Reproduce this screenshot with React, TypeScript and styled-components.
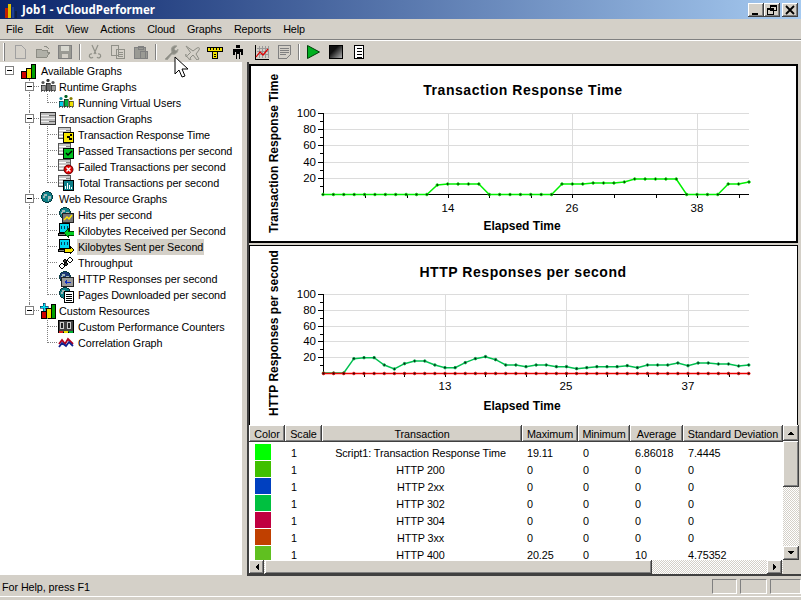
import React from 'react'
import styled, { createGlobalStyle } from 'styled-components'

const face = '#d4d0c8'
const uiFont = '"Liberation Sans", Arial, sans-serif'
const chartFont = '"Liberation Sans", Arial, sans-serif'
const raised = 'inset -1px -1px 0 #404040, inset 1px 1px 0 #fff, inset -2px -2px 0 #808080'

const GlobalStyle = createGlobalStyle`
  html, body { margin: 0; padding: 0; background: ${face}; }
  body { font-family: ${uiFont}; font-size: 10.8px; letter-spacing: -0.08px; color: #000; }
`

const Win = styled.div`
  position: relative;
  width: 801px;
  height: 600px;
  overflow: hidden;
  background: ${face};
`
const TitleBar = styled.div`
  height: 19px;
  display: flex;
  align-items: center;
  padding-left: 3px;
  background: linear-gradient(90deg, #0a246a, #a6caf0);
  color: #fff;
  font-family: "Noto Sans", sans-serif;
  font-weight: bold;
  font-size: 11.5px;
  letter-spacing: 0;
  svg { margin-right: 3px; }
`
const CapButtons = styled.div`
  position: absolute;
  top: 3px;
  right: 3px;
  display: flex;
`
const CapButton = styled.div<{ $gap?: boolean }>`
  width: 16px;
  height: 14px;
  margin-left: ${p => (p.$gap ? 2 : 0)}px;
  background: ${face};
  box-shadow: ${raised};
  svg { display: block; }
`
const MenuBar = styled.div`
  height: 20px;
  display: flex;
  align-items: center;
  gap: 12px;
  padding-left: 6px;
  border-bottom: 1px solid #808080;
  box-shadow: 0 1px 0 #fff;
`
const ToolBar = styled.div`
  position: relative;
  height: 22px;
  margin-top: 1px;
`
const Grip = styled.div`
  position: absolute;
  left: 3px;
  top: 2px;
  width: 1px;
  height: 18px;
  background: #fff;
  border-right: 1px solid #808080;
`
const ToolSep = styled.div<{ $x: number }>`
  position: absolute;
  left: ${p => p.$x}px;
  top: 3px;
  width: 0;
  height: 16px;
  border-left: 1px solid #808080;
  border-right: 1px solid #fff;
`
const ToolIcon = styled.div<{ $x: number }>`
  position: absolute;
  left: ${p => p.$x}px;
  top: 3px;
  width: 16px;
  height: 16px;
  svg { display: block; }
`
const Cursor = styled.svg`
  position: absolute;
  left: 174px;
  top: 56px;
  z-index: 5;
`

const TreePanel = styled.div`
  position: absolute;
  left: 0;
  top: 62px;
  width: 242px;
  height: 513px;
  background: #fff;
  padding-top: 1px;
  box-sizing: border-box;
`
const TreeRow = styled.div<{ $level: number }>`
  position: relative;
  height: 16px;
  display: flex;
  align-items: center;
  padding-left: ${p => [20, 40, 58][p.$level]}px;
  svg { flex: none; display: block; margin-right: ${p => (p.$level === 0 ? 5 : p.$level === 1 ? 3 : 4)}px; }
`
const TreeLabel = styled.span<{ $selected?: boolean }>`
  margin-left: ${p => (p.$selected ? -1 : 0)}px;
  padding: 0 ${p => (p.$selected ? 1 : 0)}px;
  white-space: nowrap;
  line-height: 16px;
  background: ${p => (p.$selected ? face : 'transparent')};
`
const Expander = styled.div<{ $x: number }>`
  position: absolute;
  left: ${p => p.$x}px;
  top: 3px;
  width: 7px;
  height: 7px;
  background: #fff;
  border: 1px solid #808080;
  z-index: 2;
  &::after {
    content: '';
    position: absolute;
    left: 1px;
    top: 3px;
    width: 5px;
    height: 1px;
    background: #000;
  }
`
const VGuide = styled.div<{ $x: number; $y: number; $h: number }>`
  position: absolute;
  left: ${p => p.$x}px;
  top: ${p => p.$y}px;
  height: ${p => p.$h}px;
  border-left: 1px dotted #808080;
`
const HGuide = styled.div<{ $x: number; $w: number }>`
  position: absolute;
  left: ${p => p.$x}px;
  top: 7px;
  width: ${p => p.$w}px;
  border-top: 1px dotted #808080;
`

const Divider = styled.div`
  position: absolute;
  left: 247px;
  top: 62px;
  width: 2px;
  height: 513px;
  background: #404040;
`
const ChartBox = styled.div<{ $top: number; $height: number; $active?: boolean }>`
  position: absolute;
  left: 249px;
  top: ${p => p.$top}px;
  width: 549px;
  height: ${p => p.$height}px;
  box-sizing: border-box;
  background: #fff;
  border: ${p => (p.$active ? 2 : 1)}px solid #000;
  ${p => (p.$active ? '' : 'border-bottom: none;')}
`
const ChartTitle = styled.div<{ $top: number }>`
  position: absolute;
  left: 248px;
  top: ${p => p.$top}px;
  width: 550px;
  text-align: center;
  font: bold 14px ${chartFont};
  letter-spacing: 0.55px;
  box-sizing: border-box;
  z-index: 2;
`
const XTitle = styled.div<{ $top: number }>`
  position: absolute;
  left: 422px;
  top: ${p => p.$top}px;
  width: 200px;
  text-align: center;
  font: bold 12px ${chartFont};
  letter-spacing: 0;
  z-index: 2;
`
const YTitle = styled.div<{ $bottom: number }>`
  position: absolute;
  left: 267px;
  top: ${p => p.$bottom}px;
  font: bold 12px ${chartFont};
  letter-spacing: 0;
  line-height: 14px;
  white-space: nowrap;
  transform-origin: 0 0;
  transform: rotate(-90deg);
  z-index: 2;
`
const Plot = styled.svg`
  position: absolute;
  left: 0;
  top: 0;
  z-index: 1;
  text { font: 11.5px ${chartFont}; letter-spacing: 0; }
`

const TableWrap = styled.div`
  position: absolute;
  left: 249px;
  top: 425px;
  width: 550px;
  height: 135px;
  background: #fff;
  overflow: hidden;
`
const HeadRow = styled.div`
  display: flex;
  height: 17px;
  margin-bottom: 1px;
`
const HeadCell = styled.div<{ $w: number }>`
  width: ${p => p.$w}px;
  flex: none;
  box-sizing: border-box;
  text-align: center;
  line-height: 18px;
  background: ${face};
  white-space: nowrap;
  overflow: hidden;
  box-shadow: ${raised};
`
const BodyRow = styled.div`
  display: flex;
  height: 17px;
  line-height: 21px;
`
const Cell = styled.div<{ $w: number; $center?: boolean; $pad?: number }>`
  width: ${p => p.$w}px;
  flex: none;
  box-sizing: border-box;
  padding-left: ${p => p.$pad ?? (p.$center ? 0 : 5)}px;
  padding-right: ${p => (p.$center ? 3 : 0)}px;
  text-align: ${p => (p.$center ? 'center' : 'left')};
  white-space: nowrap;
`
const Swatch = styled.div<{ $color: string }>`
  width: 16px;
  height: 16px;
  margin: 1px 0 0 1px;
  background: ${p => p.$color};
`
const VBar = styled.div`
  position: absolute;
  left: 783px;
  top: 425px;
  width: 16px;
  height: 135px;
  background: repeating-conic-gradient(#fff 0 25%, ${face} 0 50%) 0 0 / 2px 2px;
`
const ScrollBtn = styled.div<{ $top?: number; $left?: number; $w?: number; $h?: number }>`
  position: absolute;
  left: ${p => p.$left ?? 0}px;
  top: ${p => p.$top ?? 0}px;
  width: ${p => p.$w ?? 16}px;
  height: ${p => p.$h ?? 16}px;
  background: ${face};
  box-shadow: ${raised};
  display: flex;
  align-items: center;
  justify-content: center;
`
const HBar = styled.div`
  position: absolute;
  left: 249px;
  top: 560px;
  width: 534px;
  height: 14px;
  background: repeating-conic-gradient(#fff 0 25%, ${face} 0 50%) 0 0 / 2px 2px;
`
const BottomEdge = styled.div`
  position: absolute;
  left: 247px;
  top: 574px;
  width: 554px;
  height: 2px;
  background: #404040;
`
const StatusBar = styled.div`
  position: absolute;
  left: 0;
  top: 577px;
  width: 801px;
  height: 20px;
  line-height: 20px;
  padding-left: 2px;
  box-sizing: border-box;
  border-bottom: 1px solid #fff;
`
const StatusCell = styled.div<{ $x: number; $w: number }>`
  position: absolute;
  left: ${p => p.$x}px;
  top: 2px;
  width: ${p => p.$w}px;
  height: 15px;
  box-sizing: border-box;
  border: 1px solid;
  border-color: #808080 #fff #fff #808080;
`

/* ---------- icon drawings, 16x16 unless noted ---------- */
const Ico = ({ children }: { children: React.ReactNode }) => (
  <svg width="16" height="16" viewBox="0 0 16 16" shapeRendering="crispEdges">{children}</svg>
)

const Bars = () => (
  <>
    <path d="M1 9l2-1h3v7H1z" fill="#d00000" stroke="#000" />
    <path d="M6 6l2-1h3v10H6z" fill="#f0e000" stroke="#000" />
    <path d="M11 2l2-1h2v14h-4z" fill="#00a000" stroke="#000" />
  </>
)
const DocStack = () => (
  <>
    <path d="M0.5 0.5h12v11h-12z" fill="#c8c8c8" stroke="#555" />
    <path d="M1 3h11M1 6h11M1 9h6" stroke="#fff" />
    <path d="M8 3h4M8 6h4" stroke="#888" />
  </>
)
const Globe = ({ c = '#0f7f86' }: { c?: string }) => (
  <>
    <circle cx="7" cy="6" r="5.5" fill={c} stroke="#063a40" />
    <path d="M4 3h3v2H5v2H3zM8 5h3v3H9v2H8z" fill="#9fb8b8" />
  </>
)
const Monitor = () => (
  <>
    <path d="M1.5 0.5h10v9h-10z" fill="#00d8f0" stroke="#000" />
    <path d="M3 3h1v3H3zM6 3h1v3H6zM9 3h1v3H9z" fill="#004060" />
    <path d="M0.5 10.5h10v2h-10z" fill="#808080" stroke="#000" />
  </>
)
const Figure = ({ x, y, c, head }: { x: number; y: number; c: string; head: string }) => (
  <>
    <circle cx={x + 2} cy={y + 1.5} r="1.6" fill={head} shapeRendering="auto" />
    <path d={`M${x} ${y + 4}h4v${12 - y - 4}h-1v-1h-2v1h-1z`} fill={c} stroke="#111" strokeWidth="0.6" />
  </>
)

const treeIcons: Record<string, React.ReactNode> = {
  available: <Bars />,
  people: (
    <>
      <Figure x={1} y={2} c="#999" head="#555" />
      <Figure x={11} y={2} c="#999" head="#555" />
      <Figure x={6} y={0} c="#666" head="#333" />
    </>
  ),
  running: (
    <>
      <Figure x={1} y={2} c="#00d0e8" head="#0a8a9a" />
      <Figure x={11} y={2} c="#f0e000" head="#888000" />
      <Figure x={6} y={0} c="#00b040" head="#006020" />
    </>
  ),
  trans: (
    <>
      <path d="M0.5 1.5h15v12H0.5z" fill="#bbb" stroke="#333" />
      <path d="M1 4h14M1 7h14M1 10h14" stroke="#eee" />
      <path d="M9 4h6M9 10h6" stroke="#666" />
    </>
  ),
  tResp: (
    <>
      <DocStack />
      <path d="M5.5 5.5h10v10h-10z" fill="#f8e800" stroke="#000" />
      <path d="M12 7h2v2h-2zM10 9h2v2h2v2h-3v-2H9V9z" fill="#000" />
    </>
  ),
  tPass: (
    <>
      <DocStack />
      <path d="M5.5 5.5h10v10h-10z" fill="#00c020" stroke="#000" />
      <path d="M8 10l2 2 4-4" fill="none" stroke="#000" strokeWidth="1.5" shapeRendering="auto" />
    </>
  ),
  tFail: (
    <>
      <DocStack />
      <circle cx="10.5" cy="10.5" r="4.5" fill="#e00000" stroke="#600" shapeRendering="auto" />
      <path d="M8.5 8.5l4 4M12.5 8.5l-4 4" stroke="#fff" strokeWidth="1.4" shapeRendering="auto" />
    </>
  ),
  tTotal: (
    <>
      <DocStack />
      <path d="M5.5 5.5h10v10h-10z" fill="#0c7f88" stroke="#000" />
      <path d="M7 11h1v3H7zM9 8h1v6H9zM11 10h1v4h-1zM13 12h1v2h-1z" fill="#fff" />
    </>
  ),
  globe: <Globe />,
  hits: (
    <>
      <Globe />
      <path d="M4.5 6.5h11v9h-11z" fill="#777" stroke="#222" />
      <path d="M6 13l3-3 2 2 3-4" fill="none" stroke="#ffe800" strokeWidth="1.4" shapeRendering="auto" />
    </>
  ),
  kbIn: (
    <>
      <Monitor />
      <path d="M6 10l4-4v2h6v4h-6v2z" fill="#00d020" stroke="#040" />
    </>
  ),
  kbOut: (
    <>
      <Monitor />
      <path d="M16 11l-4-4v2H6v4h6v2z" fill="#f8e800" stroke="#000" />
    </>
  ),
  through: (
    <>
      <path d="M1 11l3-3 3 3-3 3zM9 5l3-3 3 3-3 3z" fill="#fff" stroke="#000" shapeRendering="auto" />
      <path d="M6 9l2-2 2 2-2 2zM5 6l2-2 2 2-2 2z" fill="#333" stroke="#000" shapeRendering="auto" />
    </>
  ),
  http: (
    <>
      <Globe c="#203878" />
      <path d="M3.5 6.5h12v9h-12z" fill="#999" stroke="#222" />
      <path d="M6 11l3-2v1.5h4v1.2H9V13z" fill="#1030c0" />
    </>
  ),
  pages: (
    <>
      <Globe />
      <path d="M6.5 4.5h9v11h-9z" fill="#fff" stroke="#000" />
      <path d="M8 7h6M8 9h6M8 11h6M8 13h6" stroke="#000" />
    </>
  ),
  custom: (
    <>
      <Bars />
      <path d="M3 0h2v3h3v2H5v3H3V5H0V3h3z" fill="#00e0f0" stroke="#003" strokeWidth="0.5" />
    </>
  ),
  counters: (
    <>
      <path d="M0.5 1.5h15v12H0.5z" fill="#444" stroke="#000" />
      <path d="M2 3h4v7H2zM9 3h4v7H9z" fill="#ccc" />
      <path d="M3 4h2v5H3zM10 4h2v5h-2z" fill="#222" />
      <path d="M1 12h4v2H1z" fill="#e02020" />
      <path d="M6 12h4v2H6z" fill="#f0e000" />
      <path d="M11 12h4v2h-4z" fill="#00b030" />
    </>
  ),
  corr: (
    <>
      <path d="M1 9l3-4 3 4 3-5 5 5" fill="none" stroke="#b00020" strokeWidth="1.8" shapeRendering="auto" />
      <path d="M1 12l3-4 4 3 3-4 4 4" fill="none" stroke="#102090" strokeWidth="1.8" shapeRendering="auto" />
    </>
  ),
}

const toolIcons: { x: number; node: React.ReactNode }[] = [
  { x: 13, node: <path d="M2.5 1.5h6l4 4v9h-10z" fill="none" stroke="#a0a0a0" /> },
  { x: 35, node: <path d="M1 13V5h5l1 1h5v2h3l-3 5zM9 2l3 1 2 2" fill="#b0b0a8" stroke="#8c8c84" /> },
  {
    x: 57,
    node: (
      <>
        <path d="M1.5 1.5h13v13h-13z" fill="#9a9a94" stroke="#808080" />
        <path d="M4 2h8v5H4z" fill="#d8d8d0" />
        <path d="M5 10h6v4H5z" fill="#d4d0c8" />
      </>
    ),
  },
  { x: 87, node: <path d="M5 1l4 9M11 1l-4 9M6 13a2 2 0 1 1-1-3M10 13a2 2 0 1 0 1-3" fill="none" stroke="#909088" strokeWidth="1.2" shapeRendering="auto" /> },
  { x: 110, node: <path d="M1.5 1.5h7v10h-7zM6.5 5.5h8v9h-8zM8 8h5M8 10h5M8 12h5" fill="#d4d0c8" stroke="#909088" /> },
  { x: 133, node: <path d="M1.5 3.5h11v11h-11zM5 2h5v3H5zM7.5 7.5h7v7h-7z" fill="#9a9a94" stroke="#808080" /> },
  { x: 163, node: <path d="M2 15l7-7c-2-4 1-7 5-6l-3 3 2 2 2-2c0 4-3 6-6 5l-5 6z" fill="#8c8c84" stroke="#a0a098" shapeRendering="auto" /> },
  { x: 185, node: <path d="M1 2l7 5 4-3c2-1 3 0 2 2l-3 4 3 5-2 1-4-5-3 3 1 2-1 .5-2-3-3-2 .5-1 2 1 3-3z" fill="#d4d0c8" stroke="#8c8c84" shapeRendering="auto" /> },
  {
    x: 207,
    node: (
      <>
        <path d="M0.5 3.5h15v4h-15z" fill="#f0e000" stroke="#000" />
        <path d="M5.5 7.5h5v7h-5z" fill="#f0e000" stroke="#000" />
        <path d="M3 4v2M6 4v2M9 4v2M12 4v2M7 10h2M7 12h2" stroke="#000" />
      </>
    ),
  },
  { x: 230, node: <path d="M6 1h4v3H6zM3 5h10v6h-2v-3h-1v7H9v-5H7v5H6V8H5v3H3z" fill="#000" /> },
  {
    x: 254,
    node: (
      <>
        <path d="M1.5 1v14H15" fill="none" stroke="#000" />
        <path d="M3 4h12M3 7h12M3 10h12M5 2v12M8 2v12M11 2v12M14 2v12" stroke="#999" />
        <path d="M2 13l4-5 3 3 5-6" fill="none" stroke="#e00000" strokeWidth="1.2" shapeRendering="auto" />
      </>
    ),
  },
  { x: 277, node: <path d="M1.5 1.5h12v9l-4 4h-8zM3 4h9M3 6h9M3 8h9M3 10h6" fill="#d4d0c8" stroke="#808080" /> },
  { x: 305, node: <path d="M2.5 1.5L14.5 8 2.5 14.5z" fill="#00b020" stroke="#004008" shapeRendering="auto" /> },
  {
    x: 328,
    node: (
      <>
        <defs>
          <linearGradient id="stopFill" x1="0" y1="0" x2="1" y2="1">
            <stop offset="0.35" stopColor="#111" />
            <stop offset="1" stopColor="#bbb" />
          </linearGradient>
        </defs>
        <path d="M1.5 1.5h13v13h-13z" fill="url(#stopFill)" stroke="#000" />
      </>
    ),
  },
  { x: 351, node: <path d="M3.5 1.5h9v13h-9zM6 4h5M6 7h5M6 10h5M6 13h5" fill="#fff" stroke="#000" /> },
]

/* ---------- charts ---------- */
type ChartSpec = {
  x0: number
  step: number
  yTop: number
  yBase: number
  grid: number[]
  labels: { x: number; text: string }[]
  ticks: number[]
  labelY: number
}

const Chart = ({ spec, series }: { spec: ChartSpec; series: { color: string; ys: number[] }[] }) => {
  const right = 749
  return (
    <Plot width="801" height="600" shapeRendering="auto">
      {spec.grid.map(y => (
        <line key={y} x1={323} x2={right} y1={y + 0.5} y2={y + 0.5} stroke="#dcdcdc" />
      ))}
      {spec.labels.map(l => (
        <line key={l.text} x1={l.x + 0.5} x2={l.x + 0.5} y1={spec.yTop} y2={spec.yBase} stroke="#dcdcdc" />
      ))}
      <line x1={323.5} x2={323.5} y1={spec.yTop} y2={spec.yBase} stroke="#000" />
      <line x1={323} x2={right} y1={spec.yBase + 0.5} y2={spec.yBase + 0.5} stroke="#000" />
      {spec.grid.map((y, i) => (
        <g key={y}>
          <line x1={318} x2={323} y1={y + 0.5} y2={y + 0.5} stroke="#000" />
          <line x1={320} x2={323} y1={y + 8.5} y2={y + 8.5} stroke="#000" />
          <text x={316} y={y + 4} textAnchor="end">{100 - i * 20}</text>
        </g>
      ))}
      {[...spec.ticks, ...spec.labels.map(l => l.x)].map(x => (
        <line key={x} x1={x + 0.5} x2={x + 0.5} y1={spec.yBase} y2={spec.yBase + 4} stroke="#000" />
      ))}
      {spec.labels.map(l => (
        <text key={l.text} x={l.x} y={spec.labelY} textAnchor="middle">{l.text}</text>
      ))}
      {series.map(s => (
        <g key={s.color}>
          <polyline
            points={s.ys.map((y, i) => `${spec.x0 + i * spec.step},${y}`).join(' ')}
            fill="none"
            stroke={s.color}
            strokeWidth="1.5"
          />
          {s.ys.map((y, i) => (
            <circle key={i} cx={spec.x0 + i * spec.step} cy={y} r="1.3" fill="#111" stroke={s.color} strokeWidth="0.8" />
          ))}
        </g>
      ))}
    </Plot>
  )
}

const base1 = 194.5
const chart1: ChartSpec = {
  x0: 323,
  step: 10.39,
  yTop: 113,
  yBase: 194,
  grid: [113, 129, 145, 162, 178],
  labels: [
    { x: 448, text: '14' },
    { x: 572, text: '26' },
    { x: 697, text: '38' },
  ],
  ticks: [365, 407, 489, 531, 614, 656, 739],
  labelY: 212,
}
const chart1Ys = [
  ...Array(11).fill(base1),
  185, 184, 184, 184, 184,
  ...Array(7).fill(base1),
  184, 184, 184, 183, 183, 183, 182, 179, 179, 179, 179, 179,
  ...Array(4).fill(base1),
  184, 184, 182,
]
const chart2: ChartSpec = {
  x0: 323.5,
  step: 10.125,
  yTop: 294,
  yBase: 373,
  grid: [294, 310, 326, 341, 357],
  labels: [
    { x: 445, text: '13' },
    { x: 566, text: '25' },
    { x: 688, text: '37' },
  ],
  ticks: [364, 404, 485, 526, 607, 648, 729],
  labelY: 390,
}
const chart2Green = [
  399, 399, 399, 356, 353, 353, 375, 387, 371, 363, 363, 375, 383, 383, 368, 356, 350, 359, 375, 375, 380, 375, 375,
  380, 380, 386, 383, 380, 380, 380, 377, 383, 375, 375, 375, 369, 377, 369, 369, 372, 372, 378, 375,
].map(z => 240 + z / 3)

/* ---------- table data ---------- */
const columns = [
  { name: 'Color', w: 36 },
  { name: 'Scale', w: 37 },
  { name: 'Transaction', w: 200 },
  { name: 'Maximum', w: 56 },
  { name: 'Minimum', w: 52 },
  { name: 'Average', w: 53 },
  { name: 'Standard Deviation', w: 100 },
]
const rows = [
  { color: '#00ff00', name: 'Script1: Transaction Response Time', max: '19.11', min: '0', avg: '6.86018', dev: '7.4445' },
  { color: '#40c000', name: 'HTTP 200', max: '0', min: '0', avg: '0', dev: '0' },
  { color: '#0040c0', name: 'HTTP 2xx', max: '0', min: '0', avg: '0', dev: '0' },
  { color: '#00c040', name: 'HTTP 302', max: '0', min: '0', avg: '0', dev: '0' },
  { color: '#c00040', name: 'HTTP 304', max: '0', min: '0', avg: '0', dev: '0' },
  { color: '#c04000', name: 'HTTP 3xx', max: '0', min: '0', avg: '0', dev: '0' },
  { color: '#60c020', name: 'HTTP 400', max: '20.25', min: '0', avg: '10', dev: '4.75352' },
]

const tree: { level: number; icon: string; text: string; expand?: boolean; selected?: boolean }[] = [
  { level: 0, icon: 'available', text: 'Available Graphs', expand: true },
  { level: 1, icon: 'people', text: 'Runtime Graphs', expand: true },
  { level: 2, icon: 'running', text: 'Running Virtual Users' },
  { level: 1, icon: 'trans', text: 'Transaction Graphs', expand: true },
  { level: 2, icon: 'tResp', text: 'Transaction Response Time' },
  { level: 2, icon: 'tPass', text: 'Passed Transactions per second' },
  { level: 2, icon: 'tFail', text: 'Failed Transactions per second' },
  { level: 2, icon: 'tTotal', text: 'Total Transactions per second' },
  { level: 1, icon: 'globe', text: 'Web Resource Graphs', expand: true },
  { level: 2, icon: 'hits', text: 'Hits per second' },
  { level: 2, icon: 'kbIn', text: 'Kilobytes Received per Second' },
  { level: 2, icon: 'kbOut', text: 'Kilobytes Sent per Second', selected: true },
  { level: 2, icon: 'through', text: 'Throughput' },
  { level: 2, icon: 'http', text: 'HTTP Responses per second' },
  { level: 2, icon: 'pages', text: 'Pages Downloaded per second' },
  { level: 1, icon: 'custom', text: 'Custom Resources', expand: true },
  { level: 2, icon: 'counters', text: 'Custom Performance Counters' },
  { level: 2, icon: 'corr', text: 'Correlation Graph' },
]

const Arrow = ({ d }: { d: string }) => (
  <svg width="8" height="8" viewBox="0 0 8 8" shapeRendering="crispEdges">
    <path d={d} fill="#000" />
  </svg>
)

export default function App() {
  return (
    <Win>
      <GlobalStyle />
      <TitleBar>
        <svg width="16" height="16" viewBox="0 0 16 16" shapeRendering="crispEdges">
          <path d="M2 6h3v10H2z" fill="#c02000" />
          <path d="M5 2h3v14H5z" fill="#e0c000" />
          <path d="M9 5h2v11H9z" fill="#204090" />
          <path d="M12 9h2v7h-2z" fill="#102040" />
        </svg>
        Job1 - vCloudPerformer
      </TitleBar>
      <CapButtons>
        <CapButton>
          <svg width="16" height="14" viewBox="0 0 16 14" shapeRendering="crispEdges">
            <path d="M4 10h6v2H4z" fill="#000" />
          </svg>
        </CapButton>
        <CapButton>
          <svg width="16" height="14" viewBox="0 0 16 14" shapeRendering="crispEdges">
            <path d="M6.5 2.5h6v5h-6zM3.5 5.5h6v6h-6z" fill="none" stroke="#000" />
            <path d="M6 2h7v2H6zM3 5h7v2H3z" fill="#000" />
          </svg>
        </CapButton>
        <CapButton $gap>
          <svg width="16" height="14" viewBox="0 0 16 14">
            <path d="M4 3l8 8M12 3l-8 8" stroke="#000" strokeWidth="1.8" />
          </svg>
        </CapButton>
      </CapButtons>

      <MenuBar>
        {['File', 'Edit', 'View', 'Actions', 'Cloud', 'Graphs', 'Reports', 'Help'].map(m => (
          <span key={m}>{m}</span>
        ))}
      </MenuBar>

      <ToolBar>
        <Grip />
        <ToolSep $x={79} />
        <ToolSep $x={155} />
        <ToolSep $x={298} />
        {toolIcons.map(t => (
          <ToolIcon key={t.x} $x={t.x}>
            <Ico>{t.node}</Ico>
          </ToolIcon>
        ))}
      </ToolBar>

      <TreePanel>
        {tree.map((n, i) => (
          <TreeRow key={n.text} $level={n.level}>
            {n.level === 1 && <HGuide $x={29} $w={10} />}
            {n.level === 2 && <HGuide $x={47} $w={10} />}
            {n.level === 1 && i < 15 && <VGuide $x={29} $y={0} $h={16} />}
            {n.level === 1 && i === 15 && <VGuide $x={29} $y={0} $h={8} />}
            {n.level === 2 && i < 15 && <VGuide $x={29} $y={0} $h={16} />}
            {n.level === 2 && <VGuide $x={47} $y={-1} $h={tree[i + 1]?.level === 2 ? 17 : 9} />}
            {n.expand && <Expander $x={n.level === 0 ? 5 : 25} />}
            <Ico>{treeIcons[n.icon]}</Ico>
            <TreeLabel $selected={n.selected}>{n.text}</TreeLabel>
          </TreeRow>
        ))}
      </TreePanel>

      <Divider />

      <ChartBox $top={64} $height={179} $active />
      <ChartBox $top={245} $height={180} />

      <ChartTitle $top={82}>Transaction Response Time</ChartTitle>
      <YTitle $bottom={233}>Transaction Response Time</YTitle>
      <XTitle $top={219}>Elapsed Time</XTitle>
      <Chart spec={chart1} series={[{ color: '#00f000', ys: chart1Ys }]} />

      <ChartTitle $top={264}>HTTP Responses per second</ChartTitle>
      <YTitle $bottom={416}>HTTP Responses per second</YTitle>
      <XTitle $top={399}>Elapsed Time</XTitle>
      <Chart
        spec={chart2}
        series={[
          { color: '#00c050', ys: chart2Green },
          { color: '#f00000', ys: Array(43).fill(373.5) },
        ]}
      />

      <TableWrap>
        <HeadRow>
          {columns.map(c => (
            <HeadCell key={c.name} $w={c.w}>{c.name}</HeadCell>
          ))}
        </HeadRow>
        {rows.map(r => (
          <BodyRow key={r.name}>
            <Cell $w={columns[0].w}>
              <Swatch $color={r.color} />
            </Cell>
            <Cell $w={columns[1].w} $pad={6}>1</Cell>
            <Cell $w={columns[2].w} $center>{r.name}</Cell>
            <Cell $w={columns[3].w}>{r.max}</Cell>
            <Cell $w={columns[4].w}>{r.min}</Cell>
            <Cell $w={columns[5].w}>{r.avg}</Cell>
            <Cell $w={columns[6].w}>{r.dev}</Cell>
          </BodyRow>
        ))}
      </TableWrap>

      <VBar>
        <ScrollBtn>
          <Arrow d="M4 2l3.5 4h-7z" />
        </ScrollBtn>
        <ScrollBtn $top={16} $h={46} />
        <ScrollBtn $top={121} $h={14}>
          <Arrow d="M0.5 2h7L4 6z" />
        </ScrollBtn>
      </VBar>
      <HBar>
        <ScrollBtn $w={15} $h={14}>
          <Arrow d="M2 4l4-3.5v7z" />
        </ScrollBtn>
        <ScrollBtn $left={16} $w={387} $h={14} />
        <ScrollBtn $left={518} $w={15} $h={14}>
          <Arrow d="M6 4L2 0.5v7z" />
        </ScrollBtn>
      </HBar>
      <BottomEdge />

      <StatusBar>
        For Help, press F1
        <StatusCell $x={712} $w={25} />
        <StatusCell $x={740} $w={27} />
        <StatusCell $x={770} $w={31} />
      </StatusBar>

      <Cursor width="15" height="24" viewBox="0 0 15 24">
        <path d="M1 1v17l4-4 3 7 3-1-3-7h6z" fill="#fff" stroke="#000" />
      </Cursor>
    </Win>
  )
}
